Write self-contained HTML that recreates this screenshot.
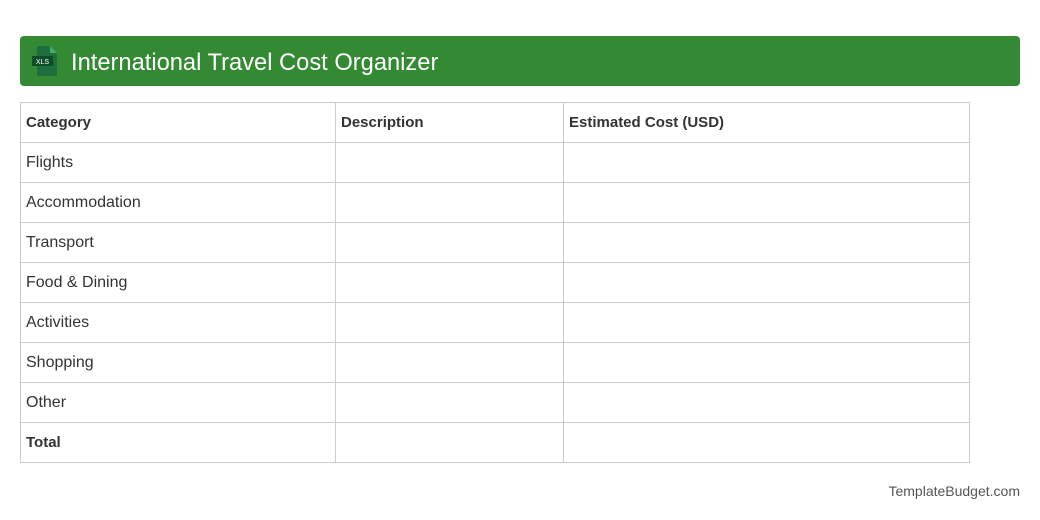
<!DOCTYPE html>
<html><head><style>
body{margin:0;background:#fff;font-family:"Liberation Sans",Arial,sans-serif;width:1040px;height:520px;position:relative;}
.hdr{position:absolute;left:20px;top:36px;width:1000px;height:50px;background:#338a33;border-radius:4px;}
.hdr h1{position:absolute;left:51px;top:2px;margin:0;line-height:50px;font-size:23.7px;font-weight:normal;color:#fff;}
.icon{position:absolute;left:11px;top:10px;}
table{position:absolute;left:20px;top:102px;border-collapse:collapse;font-size:16px;color:#333;}
td{border:1px solid #ccc;height:39px;padding:0 5px;vertical-align:middle;}
b{font-size:15px;}
.foot{position:absolute;right:20px;top:483px;font-size:14px;color:#555;}
</style></head><body>
<div class="hdr">
<svg class="icon" width="30" height="30" viewBox="0 0 30 30">
<path d="M6 0h13l7 7v23H6z" fill="#1e6e3e"/>
<path d="M19 0l7 7h-7z" fill="#4aa86a"/>
<rect x="1" y="10" width="21" height="10" fill="#0e4d2a"/>
<text x="11.5" y="18" font-size="7" fill="#fff" text-anchor="middle" font-family="Liberation Sans">XLS</text>
</svg>
<h1>International Travel Cost Organizer</h1>
</div>
<table>
<tr><td style="width:304px"><b>Category</b></td><td style="width:217px"><b>Description</b></td><td style="width:395px"><b>Estimated Cost (USD)</b></td></tr>
<tr><td>Flights</td><td></td><td></td></tr>
<tr><td>Accommodation</td><td></td><td></td></tr>
<tr><td>Transport</td><td></td><td></td></tr>
<tr><td>Food &amp; Dining</td><td></td><td></td></tr>
<tr><td>Activities</td><td></td><td></td></tr>
<tr><td>Shopping</td><td></td><td></td></tr>
<tr><td>Other</td><td></td><td></td></tr>
<tr><td><b>Total</b></td><td></td><td></td></tr>
</table>
<div class="foot">TemplateBudget.com</div>
</body></html>
